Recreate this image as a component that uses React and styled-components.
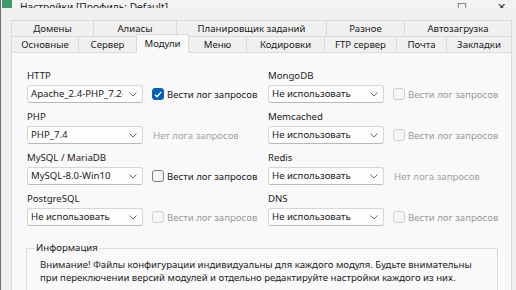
import React from "react";
import styled, { createGlobalStyle } from "styled-components";

const GlobalStyle = createGlobalStyle`
  html, body {
    margin: 0;
    padding: 0;
    background: #f0f0f0;
    overflow: hidden;
  }
  body {
    font-family: "Noto Sans", "Open Sans", sans-serif;
    font-size: 9.6px;
    color: #1b1b1b;
  }
`;

const Window = styled.div`
  width: 516px;
  height: 290px;
  box-sizing: border-box;
  border-left: 1px solid #6e6e6e;
  background: #f0f0f0;
  overflow: hidden;
`;

const TitleBar = styled.div`
  height: 8px;
  display: flex;
  align-items: flex-end;
  background: #f3f3f3;
  overflow: hidden;
`;

const AppIcon = styled.div`
  width: 10px;
  height: 9px;
  margin-left: 1px;
  background: #3f9a6e;
  border-radius: 1px;
  flex: none;
`;

const TitleText = styled.div`
  margin-left: 8px;
  font-size: 10.2px;
  line-height: 14px;
  margin-bottom: -6px;
  color: #202020;
  white-space: nowrap;
`;

const Controls = styled.div`
  margin-left: auto;
  display: flex;
  align-items: flex-end;
  gap: 30px;
  margin-right: 10px;
  color: #333;
`;

const ControlGlyph = styled.span`
  font-size: 11px;
  line-height: 14px;
  margin-bottom: -6px;
`;

const Tabs = styled.div`
  margin: 12px 0 0 10px;
  width: 501px;
`;

const TabRow = styled.div`
  display: flex;
  height: 16px;
`;

const Tab = styled.div`
  flex: none;
  box-sizing: border-box;
  width: ${p => p.w}px;
  height: ${p => (p.active ? 19 : 16)}px;
  margin-top: ${p => (p.active ? -2 : 0)}px;
  border-top: 1px solid #dadada;
  border-right: 1px solid #dadada;
  border-left: ${p => (p.first || p.active ? "1px solid #dadada" : "none")};
  margin-left: ${p => (p.active ? -1 : 0)}px;
  background: ${p => (p.active ? "#f9f9f9" : "#f0f0f0")};
  position: relative;
  z-index: ${p => (p.active ? 2 : 0)};
  display: flex;
  justify-content: center;
  padding-top: ${p => (p.active ? 1 : 0)}px;
  line-height: 15px;
  color: #1b1b1b;
  white-space: nowrap;
`;

const Panel = styled.div`
  margin-left: 10px;
  width: 501px;
  height: 250px;
  box-sizing: border-box;
  border: 1px solid #dadada;
  background: #f9f9f9;
  padding: 16px 0 0 15px;
`;

const Grid = styled.div`
  display: grid;
  grid-template-columns: 241px 241px;
  row-gap: 7px;
`;

const Field = styled.div`
  display: flex;
  flex-direction: column;
`;

const Label = styled.div`
  line-height: 14px;
  margin-bottom: 2px;
  color: #1b1b1b;
`;

const Line = styled.div`
  display: flex;
  align-items: center;
  height: 18px;
`;

const SelectBox = styled.div`
  width: 116px;
  height: 18px;
  box-sizing: border-box;
  border: 1px solid #d6d6d6;
  border-bottom-color: #b8b8b8;
  border-radius: 3px;
  background: #fdfdfd;
  display: flex;
  align-items: center;
  padding: 0 5px 0 3px;
  flex: none;
`;

const SelectValue = styled.span`
  flex: 1;
  overflow: hidden;
  white-space: nowrap;
  line-height: 16px;
  margin-right: 6px;
`;

const CheckWrap = styled.div`
  display: flex;
  align-items: center;
  margin-left: 9px;
  color: ${p => (p.disabled ? "#9a9a9a" : "#1b1b1b")};
  white-space: nowrap;
`;

const Box = styled.div`
  width: 12px;
  height: 12px;
  box-sizing: border-box;
  border-radius: 3px;
  margin-right: 3px;
  display: flex;
  align-items: center;
  justify-content: center;
  background: ${p => (p.checked ? "#005fb8" : p.disabled ? "#f6f6f6" : "#f7f7f7")};
  border: 1px solid ${p => (p.checked ? "#005fb8" : p.disabled ? "#cfcfcf" : "#7d7d7d")};
`;

const NoLog = styled.span`
  margin-left: 10px;
  color: #a3a3a3;
  white-space: nowrap;
`;

const InfoBox = styled.fieldset`
  margin: 15px 0 0 -1px;
  width: 472px;
  box-sizing: border-box;
  border: 1px solid #dcdcdc;
  border-radius: 0;
  padding: 3px 10px 20px 13px;
  min-inline-size: 0;
`;

const Legend = styled.legend`
  margin-left: -5px;
  padding: 0 1px;
  line-height: 14px;
  color: #1b1b1b;
`;

const InfoLine = styled.div`
  line-height: 13px;
  white-space: nowrap;
  color: #1b1b1b;
`;

const Chevron = () => (
  <svg width="8" height="5" viewBox="0 0 8 5" style={{ flex: "none" }}>
    <polyline points="0.5,0.5 4,4 7.5,0.5" fill="none" stroke="#6a6a6a" strokeWidth="1" />
  </svg>
);

const Tick = () => (
  <svg width="8" height="7" viewBox="0 0 8 7">
    <polyline points="0.8,3.6 3,5.7 7.2,1" fill="none" stroke="#fff" strokeWidth="1.3" />
  </svg>
);

function Select({ value }) {
  return (
    <SelectBox>
      <SelectValue>{value}</SelectValue>
      <Chevron />
    </SelectBox>
  );
}

function LogOption({ log }) {
  if (log === "none") return <NoLog>Нет лога запросов</NoLog>;
  const checked = log === "on";
  const disabled = log === "disabled";
  return (
    <CheckWrap disabled={disabled}>
      <Box checked={checked} disabled={disabled}>{checked && <Tick />}</Box>
      Вести лог запросов
    </CheckWrap>
  );
}

const row1 = [
  ["Домены", 83],
  ["Алиасы", 83],
  ["Планировщик заданий", 150],
  ["Разное", 78],
  ["Автозагрузка", 107],
];

const row2 = [
  ["Основные", 68],
  ["Сервер", 58],
  ["Модули", 53, true],
  ["Меню", 58],
  ["Кодировки", 78],
  ["FTP сервер", 72],
  ["Почта", 50],
  ["Закладки", 65],
];

const fields = [
  ["HTTP", "Apache_2.4-PHP_7.2-7.4", "on"],
  ["MongoDB", "Не использовать", "disabled"],
  ["PHP", "PHP_7.4", "none"],
  ["Memcached", "Не использовать", "disabled"],
  ["MySQL / MariaDB", "MySQL-8.0-Win10", "off"],
  ["Redis", "Не использовать", "none"],
  ["PostgreSQL", "Не использовать", "disabled"],
  ["DNS", "Не использовать", "disabled"],
];

export default function App() {
  return (
    <Window>
      <GlobalStyle />
      <TitleBar>
        <AppIcon />
        <TitleText>Настройки [Профиль: Default]</TitleText>
        <Controls>
          <ControlGlyph>—</ControlGlyph>
          <ControlGlyph>☐</ControlGlyph>
          <ControlGlyph>✕</ControlGlyph>
        </Controls>
      </TitleBar>
      <Tabs>
        <TabRow>
          {row1.map(([name, w], i) => (
            <Tab key={name} w={w} first={i === 0}>{name}</Tab>
          ))}
        </TabRow>
        <TabRow>
          {row2.map(([name, w, active], i) => (
            <Tab key={name} w={w} first={i === 0} active={active}>{name}</Tab>
          ))}
        </TabRow>
      </Tabs>
      <Panel>
        <Grid>
          {fields.map(([label, value, log]) => (
            <Field key={label}>
              <Label>{label}</Label>
              <Line>
                <Select value={value} />
                <LogOption log={log} />
              </Line>
            </Field>
          ))}
        </Grid>
        <InfoBox>
          <Legend>Информация</Legend>
          <InfoLine>Внимание! Файлы конфигурации индивидуальны для каждого модуля. Будьте внимательны</InfoLine>
          <InfoLine>при переключении версий модулей и отдельно редактируйте настройки каждого из них.</InfoLine>
        </InfoBox>
      </Panel>
    </Window>
  );
}
